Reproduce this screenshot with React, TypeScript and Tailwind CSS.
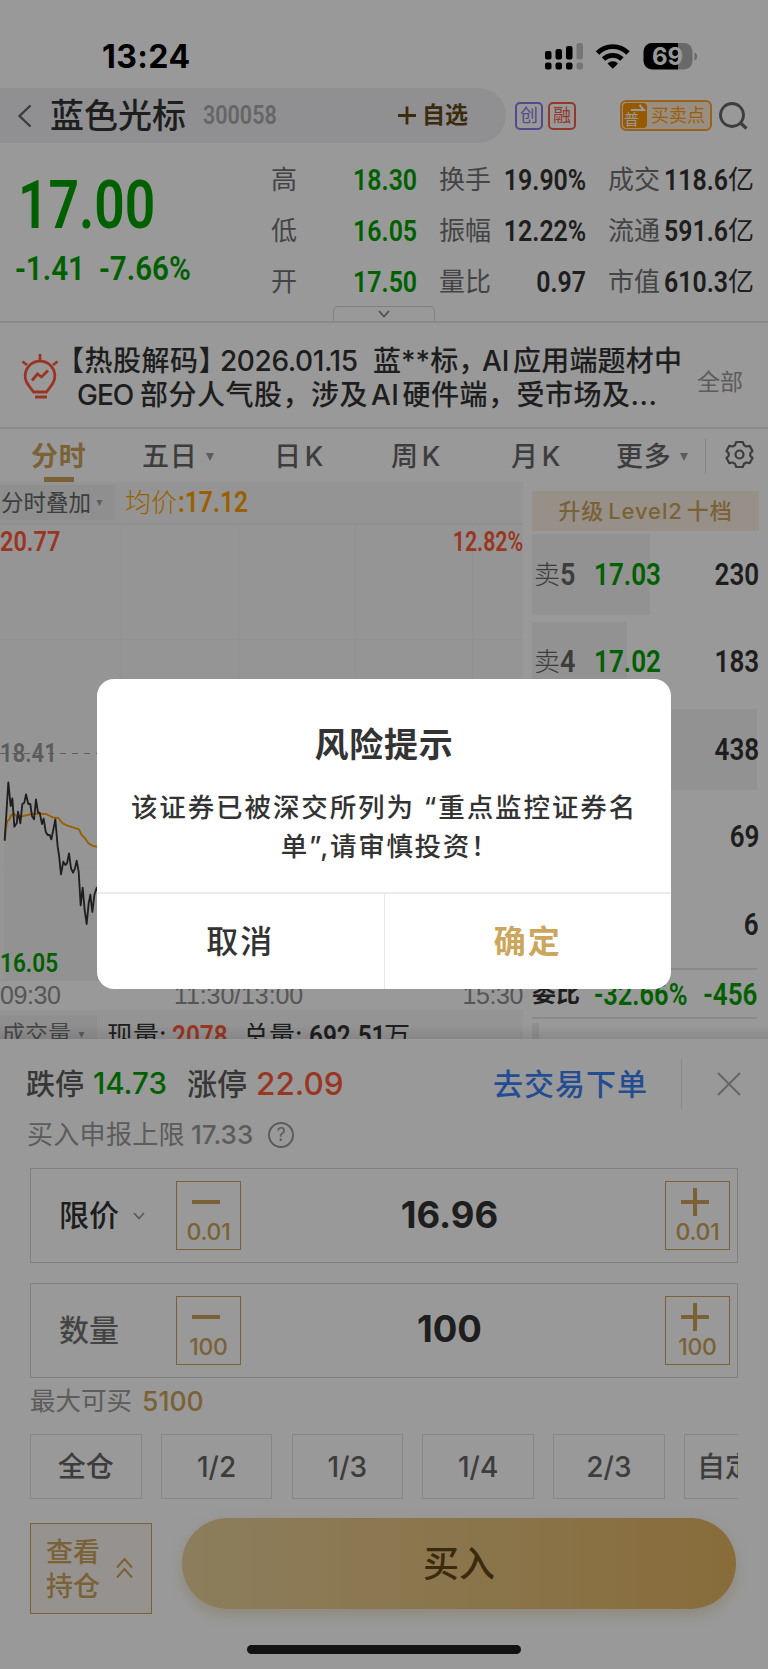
import type { ReactNode } from "react";
import clsx from "clsx";

// Narrow DIN-like figures used for quotes
function Num({ children, className }: { children: ReactNode; className?: string }) {
  return (
    <span
      className={clsx(
        "inline-block shrink-0 whitespace-nowrap font-['Roboto','Noto_Sans_CJK_SC',sans-serif] font-semibold leading-none",
        className,
      )}
    >
      {children}
    </span>
  );
}

const stats = [
  [
    { label: "高", value: "18.30" },
    { label: "换手", value: "19.90%" },
    { label: "成交", value: "118.6" },
  ],
  [
    { label: "低", value: "16.05" },
    { label: "振幅", value: "12.22%" },
    { label: "流通", value: "591.6" },
  ],
  [
    { label: "开", value: "17.50" },
    { label: "量比", value: "0.97" },
    { label: "市值", value: "610.3" },
  ],
];

const asks = [
  { label: "卖", level: "5", price: "17.03", volume: "230", bar: "w-[118px]" },
  { label: "卖", level: "4", price: "17.02", volume: "183", bar: "w-[95px]" },
  { label: "", level: "", price: "", volume: "438", bar: "w-[225px]" },
  { label: "", level: "", price: "", volume: "69", bar: "w-0" },
  { label: "", level: "", price: "", volume: "6", bar: "w-0" },
];

const portions = ["全仓", "1/2", "1/3", "1/4", "2/3"];

function StatusBar() {
  return (
    <div className="flex h-[88px] items-start pl-[102px] pt-[41px]">
      <span className="w-[443px] text-[32px] font-bold leading-[32px] tracking-[0.4px] text-black">13:24</span>
      <svg className="mt-[2px] h-[27px] w-[154px]" viewBox="0 0 154 27">
        <g fill="#000">
          <rect x="0" y="8" width="6.5" height="8.5" rx="2" />
          <rect x="10.5" y="6" width="6.5" height="10.5" rx="2" />
          <rect x="21" y="3" width="6.5" height="13.5" rx="2" />
          <rect x="0" y="19.5" width="6.5" height="7" rx="2" />
          <rect x="10.5" y="19.5" width="6.5" height="7" rx="2" />
          <rect x="21" y="19.5" width="6.5" height="7" rx="2" />
        </g>
        <g fill="#c4c4c4">
          <rect x="31.5" y="0" width="6.5" height="16.5" rx="2" />
          <rect x="31.5" y="19.5" width="6.5" height="7" rx="2" />
        </g>
        <g fill="none" stroke="#000" strokeWidth="4.8">
          <path d="M52.500 10a21.500 21.500 0 0 1 30.500 0" />
          <path d="M58.500 16a13.500 13.500 0 0 1 18.500 0" />
        </g>
        <path d="M62.500 20.400a7.500 7.500 0 0 1 10.600 0l-5.300 5.300z" fill="#000" />
        <path d="M107 0h26v26.500h-26a8.500 8.500 0 0 1-8.500-8.500V8.500A8.500 8.500 0 0 1 107 0z" fill="#000" />
        <path d="M133 0h6a8.500 8.500 0 0 1 8.500 8.500V18a8.500 8.500 0 0 1-8.500 8.500h-6z" fill="#b0b0b0" />
        <path d="M149.500 9.500c1.800.8 2.700 2 2.700 4s-.9 3.200-2.700 4z" fill="#b0b0b0" />
        <text x="122.5" y="21.7" textAnchor="middle" fontSize="24" fontWeight="700" fontFamily="Inter" fill="#fff">
          69
        </text>
      </svg>
    </div>
  );
}

function Header() {
  return (
    <div className="flex h-[55px] items-center">
      <div className="flex h-[55px] w-[506px] items-center rounded-r-full bg-[#f0f0f4] pl-[17px]">
        <svg className="h-6 w-4" viewBox="0 0 16 24" fill="none" stroke="#666" strokeWidth="2.4">
          <path d="M13.500 1.500 2.500 12l11 10.500" />
        </svg>
        <span className="ml-[17px] w-[153px] text-[34px] font-medium leading-none text-[#333]">蓝色光标</span>
        <Num className="w-[195px] origin-left scale-x-[0.86] text-[25px] font-normal text-[#aaa]">300058</Num>
        <svg className="h-[19px] w-[18px]" viewBox="0 0 18 19" stroke="#644614" strokeWidth="2.8">
          <path d="M0 9.500h18M9 .5v18" />
        </svg>
        <span className="ml-[6px] text-[23px] font-bold leading-none text-[#644614]">自选</span>
      </div>
      <span className="ml-[9px] flex h-[28px] w-[28px] items-center justify-center rounded-[5px] border-2 border-[#8a7be8] text-[18px] leading-none text-[#8a7be8]">
        创
      </span>
      <span className="ml-[5px] flex h-[28px] w-[28px] items-center justify-center rounded-[5px] border-2 border-[#f5604a] text-[18px] leading-none text-[#f5604a]">
        融
      </span>
      <div className="ml-[44px] flex h-[31px] w-[92px] items-center rounded-[6px] border-2 border-[#ffa52e] bg-[#ffefd8] pl-px">
        <div className="relative h-[25px] w-[24px] rounded-[4px] bg-[#fc9600] pl-[1px] pt-[9px] text-[15px] leading-none text-white">
          普
          <svg className="absolute left-[8px] top-[1px] h-[8px] w-[15px]" viewBox="0 0 15 8" fill="none" stroke="#fff" strokeWidth="2">
            <path d="M0 6h13L8.500 1" />
          </svg>
        </div>
        <span className="ml-[4px] text-[18px] leading-none text-[#ff9f1c]">买卖点</span>
      </div>
      <svg className="ml-[7px] h-[28px] w-[29px]" viewBox="0 0 29 28" fill="none" stroke="#666" strokeWidth="2.8">
        <circle cx="13" cy="13" r="11.500" />
        <path d="m21 20.500 6.500 6" strokeWidth="3.2" />
      </svg>
    </div>
  );
}

function Quote() {
  return (
    <div className="relative flex h-[180px] border-b-2 border-[#e6e6e6]">
      <div className="w-[271px] pt-[30px]">
        <Num className="ml-[18px] block origin-left scale-x-[0.81] text-[66px] font-bold text-[#00a000]">17.00</Num>
        <div className="mt-[12px] flex pl-[15px] text-[#00a000]">
          <Num className="w-[84px] origin-left scale-x-[0.87] text-[34px]">-1.41</Num>
          <Num className="origin-left scale-x-[0.87] text-[34px]">-7.66%</Num>
        </div>
      </div>
      <div className="flex-1 pt-[11px]">
        {stats.map((row) => (
          <div key={row[0].label} className="flex h-[51px] items-center text-[26px] text-[#727272]">
            <span className="w-[84px]">{row[0].label}</span>
            <span className="flex w-[62px] justify-end">
              <Num className="origin-right scale-x-[0.83] text-[30px] text-[#00a000]">{row[0].value}</Num>
            </span>
            <span className="ml-[22px] w-[52px] shrink-0">{row[1].label}</span>
            <span className="flex w-[95px] justify-end">
              <Num className="origin-right scale-x-[0.83] text-[30px] text-[#333]">{row[1].value}</Num>
            </span>
            <span className="ml-[22px] w-[52px] shrink-0">{row[2].label}</span>
            <span className="flex w-[68px] justify-end">
              <Num className="origin-right scale-x-[0.83] text-[30px] text-[#333]">{row[2].value}</Num>
            </span>
            <span className="text-[#333]">亿</span>
          </div>
        ))}
      </div>
      <div className="absolute bottom-0 left-[333px] flex h-[15px] w-[102px] items-center justify-center rounded-t-[5px] border border-b-0 border-[#d8d8d8]">
        <svg className="h-2 w-3" viewBox="0 0 12 8" fill="none" stroke="#888" strokeWidth="1.8">
          <path d="m1 1 5 5.500L11 1" />
        </svg>
      </div>
    </div>
  );
}

function News() {
  return (
    <div className="flex h-[106px] border-b-2 border-[#e8e8e8]">
      <svg className="ml-[21px] mt-[31px] h-[46px] w-[38px]" viewBox="0 0 38 46" fill="none" stroke="#ff5a38" strokeWidth="2.8">
        <path d="M12.500 38 7.600 31.300a14.800 14.800 0 1 1 22.800 0L25.500 38z" strokeLinejoin="round" />
        <path d="M14 43h12M19 0v6M1.500 7.500l4.500 3.500M36.500 7.500 32 11M11 26.500l5.500-6.500 4 3 6.500-6.500" />
      </svg>
      <div className="ml-[6px] w-[632px] whitespace-nowrap pt-[21px] text-[28px] font-medium leading-[34px] text-[#333]">
        <div className="-ml-[9px] flex">
          <span className="w-[164px] tracking-[0.5px]">【热股解码】</span>
          <span className="w-[153px] tracking-[-0.4px]">2026.01.15</span>
          <span className="w-[109px]">蓝**标，</span>
          <span className="w-[31px]">AI</span>
          <span className="tracking-[0.2px]">应用端题材中</span>
        </div>
        <div className="flex pl-[12px] tracking-[0.5px]">
          <span className="w-[63px] tracking-[-1px]">GEO</span>
          <span>部分人气股，涉及</span>
          <span className="ml-[3px] mr-[3px]">AI</span>
          <span>硬件端，受市场及...</span>
        </div>
      </div>
      <span className="pt-[42px] text-[23px] text-[#999]">全部</span>
    </div>
  );
}

function Caret({ className }: { className?: string }) {
  return (
    <svg className={clsx("shrink-0", className)} viewBox="0 0 8 8" fill="#999">
      <path d="M0 0h8L4 8z" />
    </svg>
  );
}

function ChartTabs() {
  return (
    <div className="flex h-[53px] items-start pt-[9px] text-[27px] font-medium leading-[38px] tracking-[0.7px] text-[#666]">
      <div className="ml-[31px] w-[111px] text-[#cba45a]">
        <span className="font-bold">分时</span>
        <div className="ml-[13px] mt-px h-[5px] w-[30px] bg-[#cba45a]" />
      </div>
      <div className="flex w-[132px] items-center">
        五日
        <Caret className="ml-[9px] h-2 w-2" />
      </div>
      <span className="w-[117px] shrink-0">
        日<span className="ml-[3px]">K</span>
      </span>
      <span className="w-[120px] shrink-0">
        周<span className="ml-[3px]">K</span>
      </span>
      <span className="w-[105px] shrink-0">
        月<span className="ml-[3px]">K</span>
      </span>
      <div className="flex w-[89px] items-center">
        更多
        <Caret className="ml-[9px] h-2 w-2" />
      </div>
      <div className="h-[35px] w-px bg-[#dcdcdc]" />
      <svg className="ml-[19px] mt-[2px] h-[29px] w-[29px]" viewBox="0 0 29 29" fill="none" stroke="#666" strokeWidth="2.2" strokeLinejoin="round">
        <path d="M11.200 2h6.600l1.300 3.300 2.200 1.200 3.500-.6 2.700 5-2.200 2.400v2.400l2.200 2.400-2.700 5-3.500-.6-2.200 1.200-1.300 3.300h-6.600l-1.300-3.300-2.200-1.200-3.500.6-2.700-5 2.200-2.400v-2.400l-2.200-2.400 2.700-5 3.500.6 2.200-1.200z" />
        <circle cx="14.500" cy="14.500" r="4" />
      </svg>
    </div>
  );
}

// Minute prices and their running average, three units per pixel
const pricePoints =
  "14,302 25,127 32,198 37,175 43,260 50,250 54,215 61,250 67,192 73,188 78,163 85,192 91,192 96,228 102,238 108,178 114,218 119,218 126,252 131,236 137,275 143,285 149,285 154,298 166,238 173,320 177,345 183,403 190,365 196,375 201,370 207,340 213,385 219,398 225,385 230,362 236,395 242,496 248,443 254,510 260,552 266,490 271,464 277,516 283,465 290,443 300,470";
const averagePoints =
  "14,302 18,262 22,243 27,240 34,225 42,221 50,230 70,228 100,221 138,222 158,232 175,234 188,250 205,258 237,268 245,285 256,296 265,310 280,318 300,322";

function Chart() {
  return (
    <div className="w-[523px] shrink-0">
      <div className="flex h-[43px] items-center border-b-2 border-[#f2f2f2] bg-[#f7f7f7]">
        <div className="flex h-[35px] w-[115px] items-center bg-[#eeeeee] pl-[1px] text-[22.5px] text-[#666]">
          分时叠加
          <Caret className="ml-[5px] h-[6px] w-[7px]" />
        </div>
        <span className="ml-[10px] text-[26px] font-light text-[#ffa000]">均价</span>
        <Num className="ml-[1px] origin-left scale-x-[0.85] text-[29px] text-[#ffa000]">:17.12</Num>
      </div>
      <div className="relative h-[456px] bg-[#f9f9f9]">
        <svg className="absolute inset-0 h-[456px] w-[523px]" viewBox="0 0 523 456" fill="none">
          <path d="M0 114.500h523M0 342.500h523M121.500 0v456M238.500 0v456M355.500 0v456M472.500 0v456M0 455.500h523" stroke="#f2f2f2" />
          <path d="M0 228.500h523" stroke="#a0a0a0" strokeDasharray="6 6" />
          <g transform="translate(0 215) scale(.33333)">
            <polygon points={`${pricePoints} 300,723 14,723`} fill="#f4f4f4" />
            <polyline points={averagePoints} stroke="#ff9d00" strokeWidth="5.5" strokeLinejoin="round" />
            <polyline points={pricePoints} stroke="#333" strokeWidth="5.5" strokeLinejoin="round" />
          </g>
        </svg>
        <div className="relative flex h-full flex-col pt-[4px]">
          <div className="flex justify-between text-[#ff5a38]">
            <Num className="origin-left scale-x-[0.87] text-[27px] font-medium">20.77</Num>
            <Num className="origin-right scale-x-[0.79] text-[27px] font-medium">12.82%</Num>
          </div>
          <Num className="mt-[184px] w-[63px] origin-left scale-x-[0.85] text-[26px] font-medium text-[#999]">18.41</Num>
          <Num className="mt-[184px] w-[63px] origin-left scale-x-[0.87] text-[26px] text-[#00a000]">16.05</Num>
        </div>
      </div>
      <div className="flex h-[29px] items-center font-['Liberation_Sans',sans-serif] text-[25px] leading-none tracking-[-0.4px] text-[#909090]">
        <span className="w-[174px]">09:30</span>
        <span className="tracking-[-0.1px]">11:30/13:00</span>
        <span className="flex-1 text-right">15:30</span>
      </div>
      <div className="flex h-[40px] bg-[#f7f7f7] pt-[5px]">
        <div className="flex h-[36px] w-[97px] items-center bg-[#eeeeee] pl-[2px] pt-[3px] text-[23px] text-[#777]">
          成交量
          <Caret className="ml-[7px] h-[6px] w-[7px]" />
        </div>
        <div className="ml-[10px] flex text-[26px] leading-[42px] text-[#333]">
          <span className="w-[65px]">现量:</span>
          <Num className="mt-[7px] w-[71px] origin-left scale-x-[0.84] text-[29px] text-[#ff5a38]">2078</Num>
          <span className="w-[66px]">总量:</span>
          <Num className="mt-[7px] w-[75px] origin-left scale-x-[0.84] text-[29px]">692.51</Num>
          <span>万</span>
        </div>
      </div>
    </div>
  );
}

function OrderBook() {
  return (
    <div className="ml-[9px] w-[227px] pt-[9px]">
      <div className="flex h-[40px] items-center justify-center bg-[#faf0e4] text-[22px] font-medium tracking-[0.9px] text-[#cba45a]">
        升级<span className="mx-[4px]">Level2</span>十档
      </div>
      <div className="flex flex-col gap-[7px] pt-[3px]">
        {asks.map((ask) => (
          <div key={ask.volume} className="relative flex h-[80.5px] items-center">
            <div className={clsx("absolute inset-y-0 left-0 bg-[#f3f3f3]", ask.bar)} />
            <span className="relative ml-[2px] w-[26px] text-[26px] font-light text-[#666]">{ask.label}</span>
            <Num className="relative w-[34px] origin-left scale-x-[0.87] text-[31px] font-medium text-[#666]">
              {ask.level}
            </Num>
            <Num className="relative origin-left scale-x-[0.84] text-[31px] text-[#00a000]">{ask.price}</Num>
            <span className="flex-1" />
            <Num className="relative origin-right scale-x-[0.84] text-[31px] text-[#333]">{ask.volume}</Num>
          </div>
        ))}
      </div>
      <div className="mt-[3px] flex h-[51px] w-[225px] items-center border-y-2 border-[#e6e6e6] pt-[2px]">
        <span className="w-[62px] shrink-0 text-[24px] font-bold text-[#333]">委比</span>
        <Num className="w-[92px] origin-left scale-x-[0.82] text-[31px] text-[#00a000]">-32.66%</Num>
        <span className="flex w-[71px] justify-end">
          <Num className="origin-right scale-x-[0.84] text-[31px] text-[#00a000]">-456</Num>
        </span>
      </div>
      <div className="mt-[4px] h-[20px] w-[7px] bg-[#eeeeee]" />
    </div>
  );
}

function StepButton({ sign, step }: { sign: "minus" | "plus"; step: string }) {
  return (
    <button
      type="button"
      className="flex h-[69px] w-[65px] shrink-0 flex-col items-center border border-[#cba45a] pt-[6px] text-[#cba45a]"
    >
      <svg className="-ml-[5px] h-[28px] w-[28px]" viewBox="0 0 28 28" stroke="currentColor" strokeWidth="4">
        <path d="M0 14h28" />
        {sign === "plus" && <path d="M14 0v28" />}
      </svg>
      <span className="mt-[3px] text-[23px] font-medium leading-[27px] tracking-[-0.3px]">{step}</span>
    </button>
  );
}

function TradeSheet() {
  return (
    <div className="relative h-[630px] bg-white">
      <div className="absolute inset-x-0 -top-[14px] h-[14px] bg-gradient-to-b from-transparent to-black/10" />
      <div className="flex h-[90px] items-center pl-[26px] text-[29px] font-medium leading-none text-[#5c5c5c]">
        <span className="w-[67px]">跌停</span>
        <span className="w-[94px] text-[29.5px] text-[#00a000]">14.73</span>
        <span className="w-[69px] text-[30px]">涨停</span>
        <span className="w-[237px] text-[31.5px] text-[#ff5a38]">22.09</span>
        <span className="w-[188px] text-[30px] tracking-[1px] text-[#3c7ff5]">去交易下单</span>
        <div className="h-[50px] w-px bg-[#e4e4e4]" />
        <svg className="ml-[35px] h-[24px] w-[24px]" viewBox="0 0 24 24" stroke="#aaa" strokeWidth="2">
          <path d="m1 1 22 22M23 1 1 23" />
        </svg>
      </div>
      <div className="-mt-[12px] flex h-[51px] items-start pl-[27px] pt-[5px] text-[26px] leading-none text-[#999]">
        <span className="w-[164px] tracking-[0.3px]">买入申报上限</span>
        <span className="w-[77px] font-medium">17.33</span>
        <span className="flex h-[26px] w-[26px] items-center justify-center rounded-full border-2 border-[#999] text-[18px]">
          ?
        </span>
      </div>
      <div className="mx-[30px] flex h-[95px] items-center border-[1.5px] border-[#d6d6d6] pl-[28px] pr-[7px]">
        <span className="text-[30px] font-medium text-[#333]">限价</span>
        <svg className="ml-[14px] mr-[31px] h-2 w-3" viewBox="0 0 12 8" fill="none" stroke="#999" strokeWidth="1.8">
          <path d="m1 1 5 5.500L11 1" />
        </svg>
        <StepButton sign="minus" step="0.01" />
        <span className="mr-[7px] flex-1 text-center text-[36.5px] font-bold text-[#333]">16.96</span>
        <StepButton sign="plus" step="0.01" />
      </div>
      <div className="mx-[30px] mt-[20px] flex h-[95px] items-center border-[1.5px] border-[#d6d6d6] pl-[28px] pr-[7px]">
        <span className="w-[117px] text-[30px] font-medium text-[#727272]">数量</span>
        <StepButton sign="minus" step="100" />
        <span className="-mt-[3px] mr-[7px] flex-1 text-center text-[36.5px] font-bold text-[#333]">100</span>
        <StepButton sign="plus" step="100" />
      </div>
      <div className="flex h-[56px] pl-[30px] pt-[5px] text-[25.5px] leading-[36px] text-[#999]">
        <span className="w-[112px]">最大可买</span>
        <span className="text-[26.5px] font-medium text-[#cba45a]">5100</span>
      </div>
      <div className="mx-[30px] flex h-[65px] gap-[19.3px] overflow-hidden text-[28px] text-[#666]">
        {portions.map((p) => (
          <div key={p} className="flex w-[111.5px] shrink-0 items-center justify-center border border-[#e2e2e2] font-medium">
            {p}
          </div>
        ))}
        <div className="flex w-[111.5px] shrink-0 items-center whitespace-nowrap border border-[#e2e2e2] pl-[12px] font-medium">
          自定义
        </div>
      </div>
      <div className="flex pl-[30px] pt-[19px]">
        <div className="mt-[5px] flex h-[91px] w-[122px] items-center border-[1.5px] border-[#cba45a] bg-[#fbf3ee] pl-[15px] pt-[3px] text-[#cba45a]">
          <div className="w-[56px] text-[27px] font-medium leading-[34px]">
            查看
            <br />
            持仓
          </div>
          <svg className="-mt-[5px] ml-[14px] h-[22px] w-[17px]" viewBox="0 0 17 22" fill="none" stroke="currentColor" strokeWidth="2">
            <path d="m1 10.500 7.500-8.500 7.500 8.500M1 20.500 8.500 12l7.500 8.500" />
          </svg>
        </div>
        <button
          type="button"
          className="ml-[30px] h-[91px] w-[554px] rounded-full bg-gradient-to-r from-[#ead29a] to-[#e3b562] text-[36px] font-medium text-[#644614] shadow-[0_6px_14px_rgba(200,165,90,0.3)]"
        >
          买入
        </button>
      </div>
      <div className="ml-[247px] mt-[31px] h-[9px] w-[274px] rounded-full bg-[#202020]" />
    </div>
  );
}

function RiskDialog() {
  return (
    <div className="absolute left-[97px] top-[679px] flex h-[310px] w-[574px] flex-col rounded-[17px] bg-white text-center text-[#333]">
      <h2 className="mt-[45px] text-[34px] font-bold leading-[42px] tracking-[0.8px]">风险提示</h2>
      <p className="mt-[22px] flex-1 whitespace-nowrap text-[26.5px] font-medium leading-[38.5px] tracking-[1.9px]">
        该证券已被深交所列为 “重点监控证券名
        <br />
        <span className="ml-[12px] tracking-[1.7px]">单”,请审慎投资！</span>
      </p>
      <div className="flex h-[97px] border-t-2 border-[#ebebeb] text-[32px] leading-[94px] tracking-[2px]">
        <button type="button" className="flex-1 border-r border-[#e8e8e8] font-medium">
          取消
        </button>
        <button type="button" className="flex-1 font-bold text-[#cba65c]">
          确定
        </button>
      </div>
    </div>
  );
}

export default function App() {
  return (
    <div className="relative h-[1669px] w-[768px] overflow-hidden bg-white font-['Inter','Noto_Sans_CJK_SC',sans-serif]">
      <StatusBar />
      <Header />
      <Quote />
      <News />
      <ChartTabs />
      <div className="flex h-[557px] overflow-hidden">
        <Chart />
        <OrderBook />
      </div>
      <TradeSheet />
      <div className="absolute inset-0 bg-black/40" />
      <RiskDialog />
    </div>
  );
}
